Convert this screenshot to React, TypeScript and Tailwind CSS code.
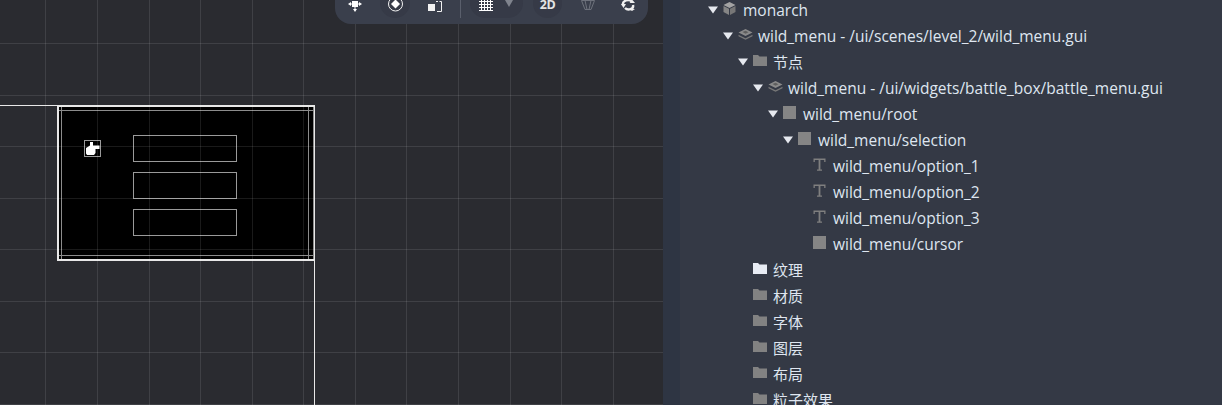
import React from 'react';

const FONT = '"Open Sans", "Noto Sans CJK SC", sans-serif';

function Arrow() {
  return (
    <svg width="10" height="8" viewBox="0 0 10 8" className="shrink-0">
      <path d="M0 0.5H10L5 7.5Z" fill="#e6e9ef" />
    </svg>
  );
}

function CubeIcon() {
  return (
    <svg width="13" height="13" viewBox="0 0 13 13">
      <path d="M6.5 0L12.5 3L6.5 6L0.5 3Z" fill="#a3a3a3" />
      <path d="M0.5 4L6 6.8V13L0.5 10Z" fill="#858585" />
      <path d="M12.5 4L7 6.8V13L12.5 10Z" fill="#777777" />
    </svg>
  );
}

function CollectionIcon() {
  return (
    <svg width="15" height="11" viewBox="0 0 15 11">
      <path d="M7.5 0L14.5 3.5L7.5 7L0.5 3.5Z" fill="#8a8a8a" />
      <path d="M4.5 3.1L7.5 1.7L10.5 3.3L7.5 4.7Z" fill="#5e5e5e" />
      <path d="M0.5 5.7L7.5 9.2L14.5 5.7V7.3L7.5 10.8L0.5 7.3Z" fill="#777777" />
    </svg>
  );
}

function FolderIcon({ light }: { light?: boolean }) {
  const c = light ? '#e8ecf4' : '#828282';
  return (
    <svg width="14" height="11" viewBox="0 0 14 11">
      <path d="M0 0H5L6.5 1.5H14V11H0Z" fill={c} />
    </svg>
  );
}

function SquareIcon() {
  return <div className="w-[13px] h-[13px] bg-[#858585]" />;
}

function TextIcon() {
  return (
    <svg width="13" height="13" viewBox="0 0 13 13">
      <path d="M0.5 0.5H12.5V4H11.2V2H7.4V11.5H9V12.8H4V11.5H5.6V2H1.8V4H0.5Z" fill="#7f7f7f" />
    </svg>
  );
}

type Row = {
  depth: number;
  open?: boolean;
  cjk?: boolean;
  icon: React.ReactNode;
  label: string;
};

const rows: Row[] = [
  { depth: 0, open: true, icon: <CubeIcon />, label: 'monarch' },
  { depth: 1, open: true, icon: <CollectionIcon />, label: 'wild_menu - /ui/scenes/level_2/wild_menu.gui' },
  { depth: 2, open: true, cjk: true, icon: <FolderIcon />, label: '节点' },
  { depth: 3, open: true, icon: <CollectionIcon />, label: 'wild_menu - /ui/widgets/battle_box/battle_menu.gui' },
  { depth: 4, open: true, icon: <SquareIcon />, label: 'wild_menu/root' },
  { depth: 5, open: true, icon: <SquareIcon />, label: 'wild_menu/selection' },
  { depth: 6, icon: <TextIcon />, label: 'wild_menu/option_1' },
  { depth: 6, icon: <TextIcon />, label: 'wild_menu/option_2' },
  { depth: 6, icon: <TextIcon />, label: 'wild_menu/option_3' },
  { depth: 6, icon: <SquareIcon />, label: 'wild_menu/cursor' },
  { depth: 2, cjk: true, icon: <FolderIcon light />, label: '纹理' },
  { depth: 2, cjk: true, icon: <FolderIcon />, label: '材质' },
  { depth: 2, cjk: true, icon: <FolderIcon />, label: '字体' },
  { depth: 2, cjk: true, icon: <FolderIcon />, label: '图层' },
  { depth: 2, cjk: true, icon: <FolderIcon />, label: '布局' },
  { depth: 2, cjk: true, icon: <FolderIcon />, label: '粒子效果' },
];

const DEPTH_PADDING = [
  'pl-[28px]', 'pl-[43px]', 'pl-[58px]', 'pl-[73px]', 'pl-[88px]', 'pl-[103px]', 'pl-[118px]',
];

function TreeRow({ row }: { row: Row }) {
  return (
    <div className={`flex items-center h-[26px] shrink-0 ${DEPTH_PADDING[row.depth]}`}>
      <div className="w-[15px] flex items-center">{row.open && <Arrow />}</div>
      <div className="w-[20px] flex items-center -mt-[3px]">{row.icon}</div>
      <span className={`text-[#dfe6f0] whitespace-nowrap ${row.cjk ? 'text-[15px]' : 'text-[15.5px] pt-[2px]'}`}>{row.label}</span>
    </div>
  );
}

function GridLines() {
  const xs = [45.5, 97.5, 149.5, 200.5, 252.5, 303.5, 355.5, 406.5, 458.5, 510.5, 561.5, 613.5];
  const ys = [43.5, 95.5, 146.5, 198.5, 249.5, 301.5, 352.5, 404.5];
  return (
    <svg width="663" height="405" className="absolute inset-0">
      {xs.map(x => <line key={x} x1={x} x2={x} y1="0" y2="405" stroke="#ffffff" strokeOpacity="0.1" />)}
      {ys.map(y => <line key={y} x1="0" x2="663" y1={y} y2={y} stroke="#ffffff" strokeOpacity="0.1" />)}
    </svg>
  );
}

function SceneBox() {
  return (
    <div className="absolute left-[57px] top-[105px] w-[258px] h-[156px] bg-black border-t-2 border-l-2 border-r border-b-2 border-[#e8e8e8]">
      {/* safe-area guide lines, they run through to the outer border */}
      <div className="absolute left-0 right-0 top-[3px] h-px bg-[#8c8c8c]" />
      <div className="absolute left-0 right-0 bottom-[3px] h-px bg-[#8c8c8c]" />
      <div className="absolute top-0 bottom-0 left-[2px] w-px bg-[#8c8c8c]" />
      <div className="absolute top-0 bottom-0 right-[5px] w-px bg-[#8c8c8c]" />
      <div className="absolute right-0 top-0 bottom-0 w-px bg-[#8c8c8c]" />
      <div className="absolute left-[25px] top-[33px] w-[17px] h-[17px] border border-[#9a9a9a] flex items-center justify-center">
        <svg width="14" height="13" viewBox="0 0 14 13">
          <path d="M4 0H7V3.5H13.5V7H9.5V11L8 13H1L0 11.5V6L4 3.5Z" fill="#ffffff" />
        </svg>
      </div>
      <div className="absolute left-[74px] top-[28px] w-[104px] h-[27px] border border-[#9a9a9a]" />
      <div className="absolute left-[74px] top-[65px] w-[104px] h-[27px] border border-[#9a9a9a]" />
      <div className="absolute left-[74px] top-[102px] w-[104px] h-[27px] border border-[#9a9a9a]" />
    </div>
  );
}

function Toolbar() {
  return (
    <div className="absolute left-[335px] top-0 w-[313px] h-[24px] rounded-b-[16px] bg-[#3a3f4c] flex items-start pl-[4px]">
      <div className="w-[32px] flex justify-center">
        <svg width="14" height="12" viewBox="0 0 14 12">
          <rect x="4" y="1" width="6" height="6" fill="#fff" />
          <path d="M0 4L3 2V6ZM14 4L11 2V6ZM7 12L5 9H9Z" fill="#fff" />
          <path d="M3 4H11M7 7V9" stroke="#fff" />
        </svg>
      </div>
      <div className="w-[30px] h-[18px] ml-[9px] rounded-b-[15px] bg-[#363a47] flex justify-center">
        <svg width="15" height="12" viewBox="0 0 15 12">
          <circle cx="7.5" cy="4" r="7" fill="none" stroke="#f2f2f2" />
          <path d="M7.5 -0.5L12 4L7.5 8.5L3 4Z" fill="#fff" />
        </svg>
      </div>
      <div className="w-[30px] ml-[10px] flex justify-center">
        <svg width="14" height="12" viewBox="0 0 14 12">
          <rect x="0" y="4" width="7" height="7" fill="#f2f2f2" />
          <path d="M8 1.5H10M11.5 1.5H13.5V11.5H9" fill="none" stroke="#f2f2f2" />
        </svg>
      </div>
      <div className="w-px h-[18px] ml-[10px] bg-[#5a5f6c]" />
      <div className="w-[53px] h-[18px] ml-[9px] rounded-b-[15px] bg-[#363a47] flex items-start pl-[9px] gap-[12px]">
        <svg width="14" height="11" viewBox="0 0 14 11" className="shrink-0">
          <path d="M0 1.5H14M0 4.5H14M0 7.5H14M0 10.5H14M2.5 0V11M5.5 0V11M8.5 0V11M11.5 0V11" stroke="#fff" />
        </svg>
        <svg width="8" height="7" viewBox="0 0 8 7" className="shrink-0">
          <path d="M0 0H8L4 7Z" fill="#7f838d" />
        </svg>
      </div>
      <div className="w-[29px] h-[18px] ml-[10px] rounded-b-[15px] bg-[#363a47] flex justify-center">
        <span className="text-[12.5px] leading-[9px] font-bold tracking-[-0.5px] text-[#e4e4e4]">2D</span>
      </div>
      <svg width="14" height="10" viewBox="0 0 14 10" className="ml-[19px] shrink-0">
        <path d="M0.5 0.5H13.5L10 9.5H4ZM4 0.5L6 9.5M10 0.5L8 9.5" fill="none" stroke="#6e727c" />
      </svg>
      <svg width="14" height="11" viewBox="0 0 14 11" className="ml-[26px] shrink-0">
        <path d="M2 5C1 1 8 -2 11 2" fill="none" stroke="#f0f0f0" strokeWidth="2.4" />
        <path d="M12 5C13 9 7 11 4 8" fill="none" stroke="#f0f0f0" strokeWidth="2.4" />
        <path d="M0 4H5L2.5 8ZM8.5 3H14L11.5 0Z" fill="#f0f0f0" />
        <path d="M8 9H14L11 11Z" fill="#f0f0f0" />
      </svg>
    </div>
  );
}

export default function App() {
  return (
    <div className="flex w-[1222px] h-[405px] overflow-hidden" style={{ fontFamily: FONT }}>
      {/* scene view */}
      <div className="relative w-[663px] h-full bg-[#2a2b30] overflow-hidden">
        <div className="absolute left-0 top-[105px] w-[60px] h-px bg-[#e8e8e8]" />
        <div className="absolute left-[314px] top-[260px] w-px h-[145px] bg-[#e8e8e8]" />
        <SceneBox />
        <GridLines />
        <Toolbar />
      </div>
      {/* outline */}
      <div className="w-[17px] h-full bg-[#2e3543]" />
      <div className="flex-1 h-full bg-[#343945] overflow-hidden">
        <div className="flex flex-col -mt-[3px]">
          {rows.map((row, i) => <TreeRow key={i} row={row} />)}
        </div>
      </div>
    </div>
  );
}
